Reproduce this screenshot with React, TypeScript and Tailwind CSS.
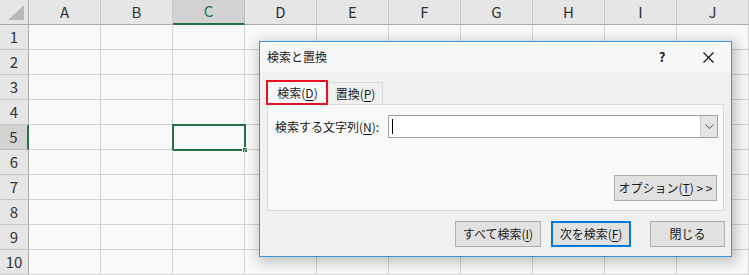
import React from "react";

const COLUMNS = ["A", "B", "C", "D", "E", "F", "G", "H", "I", "J"];
const ROWS = [1, 2, 3, 4, 5, 6, 7, 8, 9, 10];
const SELECTED_COL = "C";
const SELECTED_ROW = 5;

const jpFont = { fontFamily: '"Noto Sans CJK JP", "Noto Sans", sans-serif' };

function Underlined({ children }: { children: React.ReactNode }) {
  return <span className="underline underline-offset-2">{children}</span>;
}

function Sheet() {
  return (
    <div
      className="grid bg-[#f9f9f9] text-[#333]"
      style={{ ...jpFont, gridTemplateColumns: "29px repeat(10, 72px)", gridTemplateRows: "repeat(11, 25px)" }}
    >
      {/* corner */}
      <div className="relative border-r border-b border-[#ababab] bg-[#e6e6e6]">
        <svg className="absolute left-[8px] top-[5px]" width="16" height="15" viewBox="0 0 16 15">
          <polygon points="16,0 16,15 0,15" fill="#b8b8b8" />
        </svg>
      </div>
      {COLUMNS.map((c) => (
        <div
          key={c}
          className={`flex items-center justify-center text-[15px] ${
            c === SELECTED_COL
              ? "border-r border-[#bcbcbc] border-b-2 border-b-[#217346] bg-[#d2d2d2] text-[#217346]"
              : "border-r border-[#c8c8c8] border-b border-b-[#ababab] bg-[#e6e6e6]"
          }`}
        >
          {c}
        </div>
      ))}
      {ROWS.map((r) => (
        <React.Fragment key={r}>
          <div
            className={`flex items-center justify-center text-[15px] ${
              r === SELECTED_ROW
                ? "border-b border-[#bcbcbc] border-r-2 border-r-[#217346] bg-[#d2d2d2]"
                : "border-b border-[#c8c8c8] border-r border-r-[#ababab] bg-[#e6e6e6]"
            }`}
          >
            {r}
          </div>
          {COLUMNS.map((c) => (
            <div key={c} className="relative border-r border-b border-[#d4d4d4]">
              {c === SELECTED_COL && r === SELECTED_ROW && (
                <>
                  <div className="absolute -left-[1px] -top-[1px] h-[27px] w-[74px] border-2 border-[#217346]" />
                  <div className="absolute -right-[4px] -bottom-[4px] h-[6px] w-[6px] border border-[#f9f9f9] bg-[#217346]" />
                </>
              )}
            </div>
          ))}
        </React.Fragment>
      ))}
    </div>
  );
}

function DialogButton({
  children,
  width,
  primary,
}: {
  children: React.ReactNode;
  width: string;
  primary?: boolean;
}) {
  return (
    <button
      className={`flex h-[26px] items-center justify-center bg-[#e1e1e1] text-[12px] text-[#1a1a1a] ${width} ${
        primary ? "border-2 border-[#0078d7]" : "border border-[#adadad]"
      }`}
    >
      {children}
    </button>
  );
}

function FindDialog() {
  return (
    <div
      className="absolute left-[259px] top-[41px] flex h-[216px] w-[473px] flex-col border border-[#3c95d8] bg-[#f0f0f0] text-[12px] text-[#1a1a1a] shadow-[2px_3px_12px_3px_rgba(0,0,0,0.22)]"
      style={jpFont}
    >
      {/* title bar */}
      <div className="flex h-[30px] items-center bg-[#f7f7f7] pl-[7px]">
        <span className="flex-1">検索と置換</span>
        <span className="w-[46px] text-center text-[13px] font-bold">?</span>
        <span className="flex w-[46px] items-center justify-center">
          <svg width="11" height="11" viewBox="0 0 11 11">
            <path d="M0.5 0.5 L10.5 10.5 M10.5 0.5 L0.5 10.5" stroke="#111" strokeWidth="1.1" />
          </svg>
        </span>
      </div>

      {/* body */}
      <div className="flex flex-1 flex-col px-[7px] pt-[8px]">
        <div className="flex h-[24px] items-end">
          <div className="relative z-10 -mb-[1px] flex h-[25px] w-[61px] items-center justify-center bg-[#f9f9f9]">
            <span>
              検索(<Underlined>D</Underlined>)
            </span>
            <div className="absolute -left-[1px] top-0 h-[25px] w-[62px] border-2 border-[#e81123]" />
          </div>
          <div className="flex h-[22px] w-[55px] items-center justify-center border border-b-0 border-[#d9d9d9] bg-[#f0f0f0]">
            置換(<Underlined>P</Underlined>)
          </div>
        </div>
        <div className="flex h-[107px] flex-col border border-[#d9d9d9] bg-[#f9f9f9] pl-[7px] pr-[5px] pt-[10px]">
          <div className="flex items-center">
            <span className="w-[113px]">
              検索する文字列(<Underlined>N</Underlined>):
            </span>
            <div className="flex h-[23px] flex-1 border border-[#a0a0a0] bg-white">
              <div className="flex flex-1 items-center pl-[3px]">
                <div className="h-[15px] w-px bg-black" />
              </div>
              <div className="flex w-[17px] items-center justify-center border-l border-[#c8c8c8] bg-[#e5e5e5]">
                <svg width="9" height="5" viewBox="0 0 9 5">
                  <path d="M0.5 0.5 L4.5 4.5 L8.5 0.5" stroke="#555" strokeWidth="1" fill="none" />
                </svg>
              </div>
            </div>
          </div>
          <div className="mt-auto mb-[9px] flex justify-end pr-[1px]">
            <DialogButton width="w-[103px]">
              オプション(<Underlined>T</Underlined>)&nbsp;&gt; &gt;
            </DialogButton>
          </div>
        </div>
        <div className="-mr-[1px] mt-[10px] flex justify-end gap-[10px]">
          <DialogButton width="w-[86px]">
            すべて検索(<Underlined>I</Underlined>)
          </DialogButton>
          <DialogButton width="w-[80px]" primary>
            次を検索(<Underlined>F</Underlined>)
          </DialogButton>
          <div className="ml-[9px] flex">
            <DialogButton width="w-[75px]">閉じる</DialogButton>
          </div>
        </div>
      </div>
    </div>
  );
}

export default function App() {
  return (
    <div className="relative h-[275px] w-[749px] overflow-hidden bg-[#f9f9f9]">
      <Sheet />
      <FindDialog />
    </div>
  );
}
